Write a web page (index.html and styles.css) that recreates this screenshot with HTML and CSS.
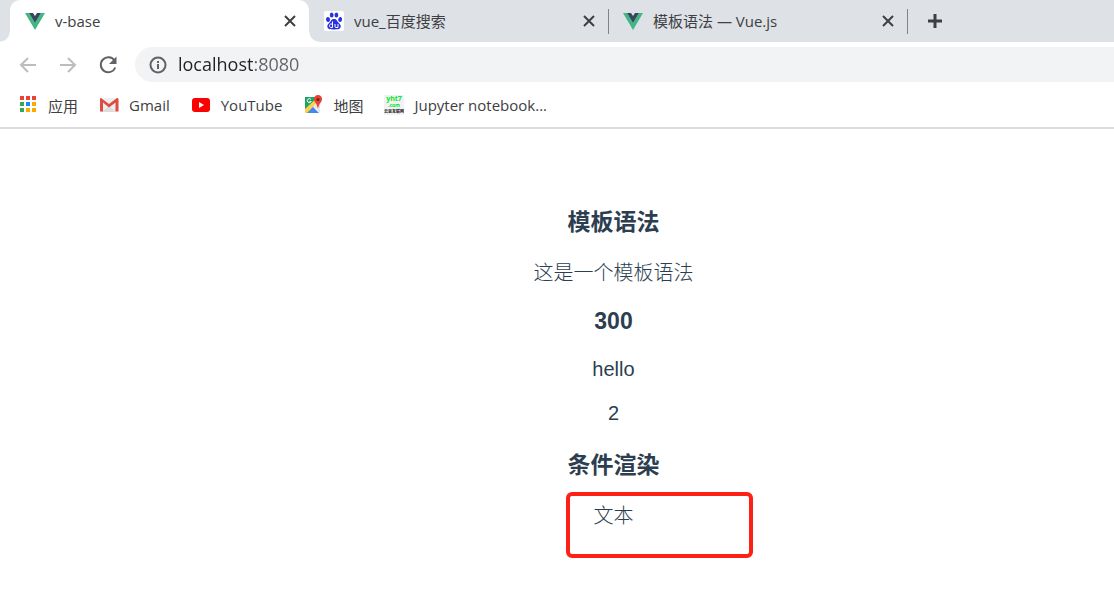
FILE: index.html
```html
<!DOCTYPE html>
<html lang="zh-CN">
<head>
    <meta charset="UTF-8">
    <meta name="viewport" content="width=device-width, initial-scale=1.0">
    <title>v-base</title>
    <link rel="stylesheet" href="styles.css">
</head>
<body>
    <header class="browser">
        <div class="tab-strip">
            <div class="tab active">
                <svg class="icon" viewBox="0 0 20 20" aria-hidden="true">
                    <path fill="#41b883" d="M0 2h4l6 10 6-10h4L10 19z"/>
                    <path fill="#35495e" d="M4 2h4l2 3 2-3h4l-6 10z"/>
                </svg>
                <button class="tab-title">v-base</button>
                <button class="close-btn" aria-label="关闭">
                    <svg viewBox="0 0 12 12"><path d="M1 1l10 10M11 1L1 11"/></svg>
                </button>
            </div>
            <div class="tab">
                <svg class="icon" viewBox="0 0 20 20" aria-hidden="true">
                    <rect width="20" height="20" rx="2" fill="#fff"/>
                    <g fill="#2932e1">
                        <ellipse cx="4" cy="8.500" rx="2" ry="2.600" transform="rotate(-10 4 8.500)"/>
                        <ellipse cx="7.700" cy="4" rx="1.900" ry="2.600"/>
                        <ellipse cx="12.400" cy="4" rx="1.900" ry="2.600"/>
                        <ellipse cx="16.200" cy="8.500" rx="1.900" ry="2.600" transform="rotate(10 16.200 8.500)"/>
                        <path d="M10 8c2.600 0 3 2.200 4.800 4 1.500 1.400 2.400 2.600 1.700 4.500-.7 2-3.400 1.900-6.500 1.900s-5.800.1-6.500-1.900c-.6-1.900.2-3.100 1.700-4.500C7 10.200 7.400 8 10 8z"/>
                    </g>
                    <path fill="none" stroke="#fff" stroke-width="1" d="M8.500 10.500v6H7c-2 0-2-3.500 0-3.500h1.500M11 13v2.500q0 1 1 1h2V13"/>
                </svg>
                <button class="tab-title">vue_百度搜索</button>
                <button class="close-btn" aria-label="关闭">
                    <svg viewBox="0 0 12 12"><path d="M1 1l10 10M11 1L1 11"/></svg>
                </button>
            </div>
            <div class="tab divided">
                <svg class="icon" viewBox="0 0 20 20" aria-hidden="true">
                    <path fill="#41b883" d="M0 2h4l6 10 6-10h4L10 19z"/>
                    <path fill="#35495e" d="M4 2h4l2 3 2-3h4l-6 10z"/>
                </svg>
                <button class="tab-title">模板语法 — Vue.js</button>
                <button class="close-btn" aria-label="关闭">
                    <svg viewBox="0 0 12 12"><path d="M1 1l10 10M11 1L1 11"/></svg>
                </button>
            </div>
            <div class="new-tab divided">
                <button class="new-tab-btn" aria-label="打开新的标签页">
                    <svg viewBox="0 0 16 16"><path d="M8 1v14M1 8h14"/></svg>
                </button>
            </div>
        </div>

        <div class="toolbar">
            <button class="nav-btn" aria-label="后退" disabled>
                <svg viewBox="0 0 20 20"><path d="M18 10H3M10 3l-7 7 7 7"/></svg>
            </button>
            <button class="nav-btn" aria-label="前进" disabled>
                <svg viewBox="0 0 20 20"><path d="M2 10h15M10 3l7 7-7 7"/></svg>
            </button>
            <button class="nav-btn" aria-label="重新加载">
                <svg viewBox="0 0 20 20">
                    <path d="M16.500 5.500A7.500 7.500 0 1 0 17.300 12.500"/>
                    <path class="solid" d="M18.500 1.500v7.500H11z"/>
                </svg>
            </button>
            <div class="address-bar">
                <svg class="info" viewBox="0 0 18 18" aria-hidden="true">
                    <circle cx="9" cy="9" r="7.500"/>
                    <path d="M9 8v5M9 5v2"/>
                </svg>
                <input class="url" type="text" value="localhost:8080" aria-label="地址">
            </div>
        </div>

        <nav class="bookmarks">
            <a class="bookmark" href="#">
                <svg class="icon" viewBox="0 0 20 20" aria-hidden="true">
                    <path fill="#ea4335" d="M2 1h4v4H2zM8 1h4v4H8zM14 1h4v4h-4z"/>
                    <path fill="#34a853" d="M2 7h4v4H2zM2 13h4v4H2z"/>
                    <path fill="#1a8cf0" d="M8 7h4v4H8z"/>
                    <path fill="#f9ab00" d="M14 7h4v4h-4zM8 13h4v4H8zM14 13h4v4h-4z"/>
                </svg>
                应用
            </a>
            <a class="bookmark" href="#">
                <svg class="icon" viewBox="0 0 20 20" aria-hidden="true">
                    <path fill="#eee" d="M2 3h16v14H2z"/>
                    <path fill="#ddd" d="M3 17l7-6 7 6z"/>
                    <path fill="#de4b3f" d="M1 3.500Q1 3 2 3l8 6 8-6q1.500 0 1.500 1v12.500h-3V7.500L10 12.500 4 7.500v9H1z"/>
                </svg>
                Gmail
            </a>
            <a class="bookmark" href="#">
                <svg class="icon" viewBox="0 0 20 20" aria-hidden="true">
                    <rect x="1" y="3" width="18" height="14" rx="3" fill="#f00"/>
                    <path fill="#fff" d="M8 7l5 3-5 3z"/>
                </svg>
                YouTube
            </a>
            <a class="bookmark" href="#">
                <svg class="icon" viewBox="0 0 20 20" aria-hidden="true">
                    <path fill="#1fa463" d="M2 2h13L2 16z"/>
                    <path fill="#ffd04b" d="M2 14L14 3l3 3L5 18H2z"/>
                    <path fill="#e4e6e8" d="M10 11l7-7v14z"/>
                    <path fill="#4285f4" d="M4 18l6-6 6 6z"/>
                    <path fill="none" stroke="#fff" stroke-width="1" d="M8 4.500a2 2 0 1 0 .2 2H6.500"/>
                    <path fill="#e54335" d="M15 0a4 4 0 0 1 4 4.300c0 3-3 4-3.500 8.200h-1C14 8.300 11 7.300 11 4.300A4 4 0 0 1 15 0z"/>
                    <circle cx="15" cy="4.500" r="1.500" fill="#7c1d16"/>
                </svg>
                地图
            </a>
            <a class="bookmark" href="#">
                <svg class="icon" viewBox="0 0 20 20" aria-hidden="true">
                    <rect width="20" height="20" fill="#f2f2f2"/>
                    <text class="logo-name" x="10" y="6" text-anchor="middle">yht7</text>
                    <text class="logo-domain" x="10" y="12" text-anchor="middle">.com</text>
                    <text class="logo-note" x="10" y="18" text-anchor="middle">云豆互联网</text>
                </svg>
                Jupyter notebook...
            </a>
        </nav>
    </header>

    <main class="page">
        <h3>模板语法</h3>
        <p>这是一个模板语法</p>
        <h3 class="latin">300</h3>
        <p class="latin">hello</p>
        <p class="latin">2</p>
        <h3>条件渲染</h3>
        <p class="marked">文本</p>
    </main>
</body>
</html>
```

FILE: styles.css
```css
:root {
    --strip: #dee1e6;
    --field: #f1f3f4;
    --text: #3c4043;
    --muted: #5f6368;
    --page-text: #2c3e50;
    --mark: #ff2015;
}

*,
*::before,
*::after {
    box-sizing: border-box;
}

body {
    margin: 0;
    background: white;
    color: var(--text);
    font-family: "Open Sans", "Noto Sans CJK SC", sans-serif;
    font-size: 15px;
}

button {
    padding: 0;
    border: none;
    background: none;
    color: inherit;
    font: inherit;
}

svg {
    display: block;
    flex: none;
}

.icon {
    width: 20px;
    height: 20px;
}

.browser {
    border-bottom: 2px solid #dadce0;
}

/* Tabs */
.tab-strip {
    display: flex;
    height: 42px;
    padding-left: 10px;
    background: var(--strip);
}

.tab {
    display: flex;
    align-items: center;
    flex: 0 1 299px;
    min-width: 0;
    gap: 10px;
    padding: 0 13px 0 15px;
    position: relative;
}

.tab.active {
    background: white;
    border-radius: 10px 10px 0 0;
}

.tab.active::before,
.tab.active::after {
    content: "";
    position: absolute;
    bottom: 0;
    width: 10px;
    height: 10px;
}

.tab.active::before {
    right: 100%;
    background: radial-gradient(circle at 0 0, transparent 9px, white 10px);
}

.tab.active::after {
    left: 100%;
    background: radial-gradient(circle at 100% 0, transparent 9px, white 10px);
}

.divided::before {
    content: "";
    position: absolute;
    left: 0;
    top: 9px;
    width: 1px;
    height: 25px;
    background: #808489;
}

.tab-title {
    flex: 1;
    min-width: 0;
    overflow: hidden;
    line-height: 20px;
    text-align: left;
    white-space: nowrap;
}

.close-btn svg {
    width: 12px;
    height: 12px;
    stroke: var(--text);
    stroke-width: 2;
}

.new-tab {
    display: flex;
    align-items: center;
    position: relative;
    padding-left: 20px;
}

.new-tab-btn svg {
    width: 16px;
    height: 16px;
    stroke: var(--text);
    stroke-width: 3;
}

/* Toolbar */
.toolbar {
    display: flex;
    align-items: center;
    gap: 20px;
    padding: 5px 0 5px 18px;
}

.nav-btn svg {
    width: 20px;
    height: 20px;
    fill: none;
    stroke: var(--muted);
    stroke-width: 2;
}

.nav-btn:disabled svg {
    stroke: #bbbdbf;
}

.nav-btn .solid {
    fill: var(--muted);
    stroke: none;
}

.address-bar {
    display: flex;
    align-items: center;
    flex: 1;
    gap: 11px;
    height: 35px;
    margin-left: -3px;
    padding-left: 14px;
    border-radius: 18px 0 0 18px;
    background: var(--field);
}

.info {
    width: 18px;
    height: 18px;
    fill: none;
    stroke: var(--muted);
    stroke-width: 2;
}

/* The host is darker than the port */
.url {
    flex: 1;
    min-width: 0;
    padding: 0 0 2px;
    border: none;
    outline: none;
    background: linear-gradient(90deg, #202124 75px, var(--muted) 75px);
    background-clip: text;
    -webkit-background-clip: text;
    color: transparent;
    font-family: inherit;
    font-size: 18px;
}

/* Bookmarks */
.bookmarks {
    display: flex;
    gap: 21px;
    height: 40px;
    padding: 0 18px 4px;
}

.bookmark {
    display: flex;
    align-items: center;
    gap: 10px;
    color: inherit;
    text-decoration: none;
    white-space: nowrap;
}

.logo-name,
.logo-domain {
    fill: #00e832;
    font-size: 7px;
    font-weight: 700;
}

.logo-domain {
    font-size: 5px;
}

.logo-note {
    fill: #111;
    font-size: 4px;
    font-weight: 700;
}

/* Page */
.page {
    padding: 53px 0 20px 113px;
    color: var(--page-text);
    font-family: "Liberation Sans", "Noto Sans CJK SC", sans-serif;
    font-size: 20px;
    font-weight: 300;
    text-align: center;
}

.page h3 {
    margin: 25px 0 22px;
    font-size: 23px;
    line-height: 31px;
}

.page p {
    margin: 0 0 22px;
    line-height: 26px;
}

.page h3.latin {
    margin-top: 22px;
    line-height: 27px;
}

.page p.latin {
    margin-bottom: 20px;
    line-height: 24px;
}

.marked {
    position: relative;
}

.marked::after {
    content: "";
    position: absolute;
    top: -11px;
    left: calc(50% - 48px);
    width: 187px;
    height: 66px;
    border: 4px solid var(--mark);
    border-radius: 6px;
}
```
